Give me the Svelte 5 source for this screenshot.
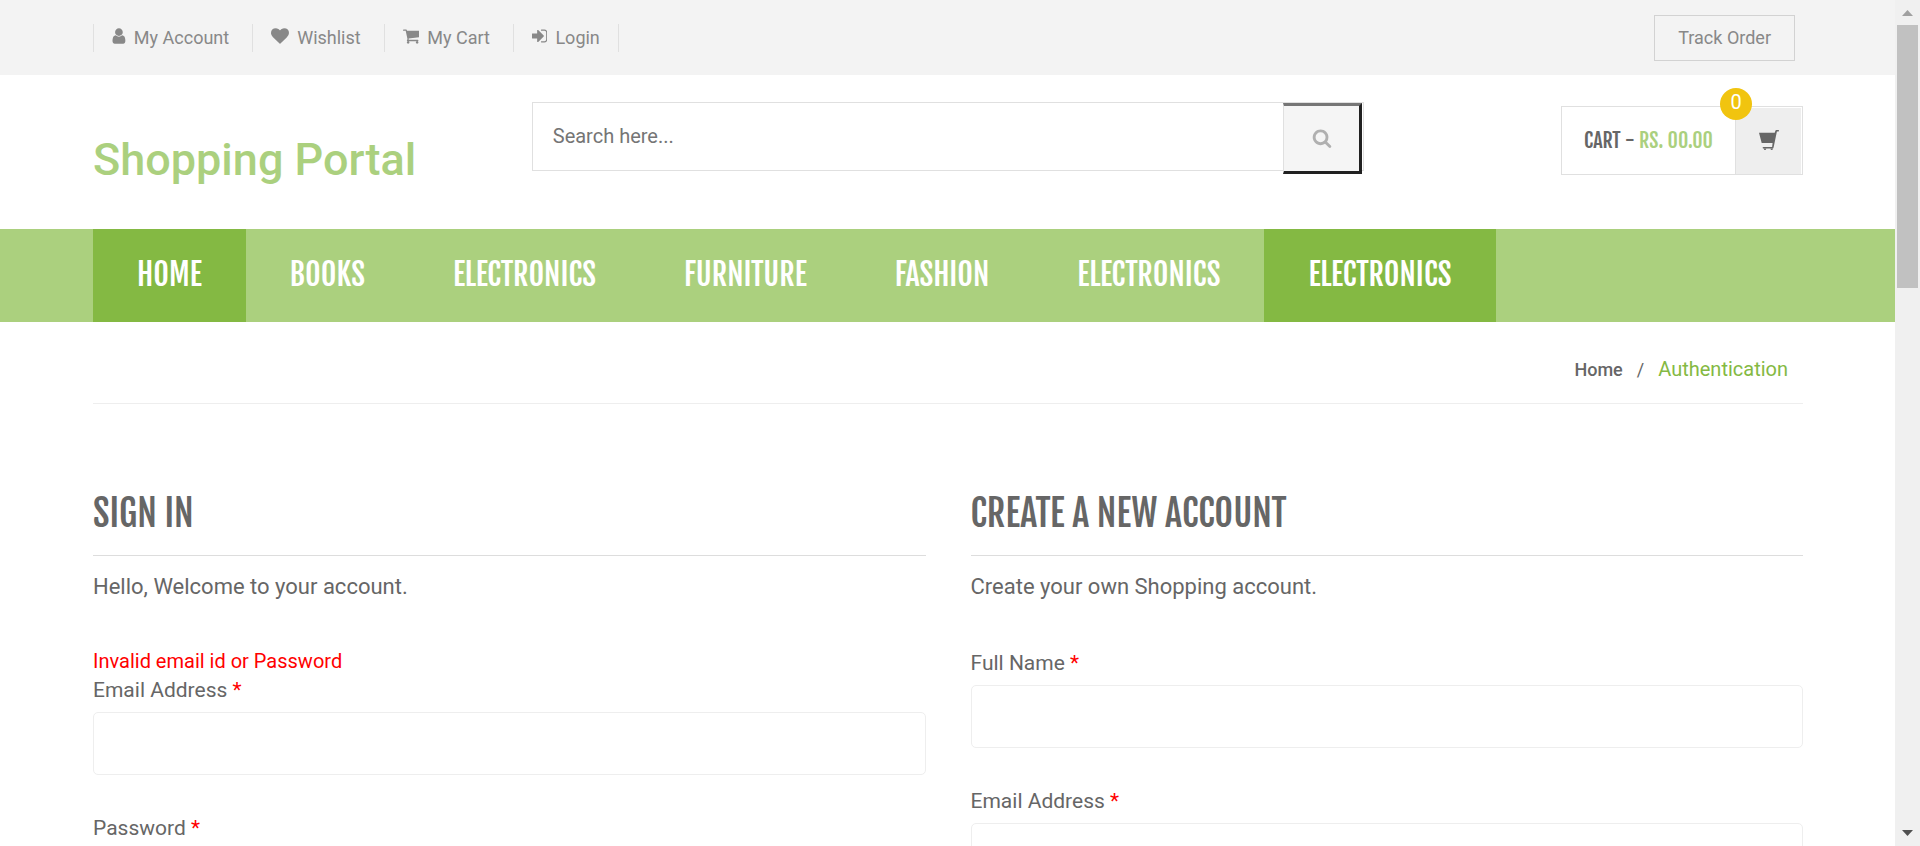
<script lang="ts">
  const ICONS = {
    user: 'M1536 1399q0 109-62.5 187t-150.5 78h-854q-88 0-150.5-78t-62.5-187q0-85 8.5-160.5t31.5-152 58.5-131 94-89 134.5-34.5q131 128 313 128t313-128q76 0 134.5 34.5t94 89 58.5 131 31.5 152 8.5 160.5zm-256-887q0 159-112.5 271.5t-271.5 112.5-271.5-112.5-112.5-271.5 112.5-271.5 271.5-112.5 271.5 112.5 112.5 271.5z',
    heart: 'M896 1664q-26 0-44-18l-624-602q-10-8-27.5-26t-55.5-65.5-68-97.5-53.5-121-23.5-138q0-220 127-344t351-124q62 0 126.5 21.5t120 58 95.5 68.5 76 68q36-36 76-68t95.5-68.5 120-58 126.5-21.5q224 0 351 124t127 344q0 221-229 450l-623 600q-18 18-44 18z',
    cart: 'M704 1536q0 52-38 90t-90 38-90-38-38-90 38-90 90-38 90 38 38 90zm896 0q0 52-38 90t-90 38-90-38-38-90 38-90 90-38 90 38 38 90zm128-1088v512q0 24-16.5 42.5t-40.5 21.5l-1044 122q13 60 13 70 0 16-24 64h920q26 0 45 19t19 45-19 45-45 19h-1024q-26 0-45-19t-19-45q0-11 8-31.5t16-36 21.5-40 15.5-29.5l-177-823h-204q-26 0-45-19t-19-45 19-45 45-19h256q16 0 28.5 6.5t19.5 15.5 13 24.5 8 26 5.5 29.5 4.5 26h1201q26 0 45 19t19 45z',
    signIn: 'M1312 896q0 26-19 45l-544 544q-19 19-45 19t-45-19-19-45v-288h-448q-26 0-45-19t-19-45v-384q0-26 19-45t45-19h448v-288q0-26 19-45t45-19 45 19l544 544q19 19 19 45zm352-352v704q0 119-84.5 203.5t-203.5 84.5h-320q-13 0-22.5-9.5t-9.5-22.5q0-4-1-20t-.5-26.5 3-23.5 10-19.5 20.5-6.5h320q66 0 113-47t47-113v-704q0-66-47-113t-113-47h-312l-11.5-1-11.5-3-8-5.5-7-9-2-13.5q0-4-1-20t-.5-26.5 3-23.5 10-19.5 20.5-6.5h320q119 0 203.5 84.5t84.5 203.5z',
    search: 'M1216 832q0-185-131.5-316.5t-316.5-131.5-316.5 131.5-131.5 316.5 131.5 316.5 316.5 131.5 316.5-131.5 131.5-316.5zm512 832q0 52-38 90t-90 38q-54 0-90-38l-343-342q-179 124-399 124-143 0-273.5-55.5t-225-150-150-225-55.5-273.5 55.5-273.5 150-225 225-150 273.5-55.5 273.5 55.5 225 150 150 225 55.5 273.5q0 220-124 399l343 343q37 37 37 90z',
  };

  const accountLinks = [
    { label: 'My Account', icon: ICONS.user, box: '206 0 1380 1792' },
    { label: 'Wishlist', icon: ICONS.heart, box: '0 0 1792 1792' },
    { label: 'My Cart', icon: ICONS.cart, box: '64 0 1664 1792' },
    { label: 'Login', icon: ICONS.signIn, box: '128 0 1536 1792' },
  ];

  const navItems = [
    { label: 'Home', active: true },
    { label: 'Books', active: false },
    { label: 'Electronics', active: false },
    { label: 'Furniture', active: false },
    { label: 'Fashion', active: false },
    { label: 'Electronics', active: false },
    { label: 'Electronics', active: true },
  ];

  const signInFields = [
    { id: 'signin-email', label: 'Email Address', type: 'email' },
    { id: 'signin-password', label: 'Password', type: 'password' },
  ];

  const registerFields = [
    { id: 'register-name', label: 'Full Name', type: 'text' },
    { id: 'register-email', label: 'Email Address', type: 'email' },
  ];
</script>

{#snippet fields(list)}
  {#each list as field}
    <div class="field">
      <label for={field.id}>{field.label} <span class="required">*</span></label>
      <input id={field.id} type={field.type} />
    </div>
  {/each}
{/snippet}

<div class="shell">
  <div class="page">
    <div class="topbar container">
      <ul class="account">
        {#each accountLinks as link}
          <li>
            <a href="#top">
              <svg class="glyph" viewBox={link.box} aria-hidden="true"><path d={link.icon} /></svg>
              {link.label}
            </a>
          </li>
        {/each}
      </ul>
      <a class="track" href="#track">Track Order</a>
    </div>

    <header class="header container">
      <a class="logo" href="#home">Shopping Portal</a>
      <form class="search">
        <input type="text" placeholder="Search here..." aria-label="Search" />
        <button type="button" aria-label="Search">
          <svg viewBox="0 0 1792 1792" aria-hidden="true"><path d={ICONS.search} /></svg>
        </button>
      </form>
      <a class="cart" href="#cart">
        <span class="total">Cart - <span class="amount">Rs. 00.00</span></span>
        <span class="basket">
          <svg viewBox="0 0 20 20" aria-hidden="true">
            <path d="M0 2.700H15.700L16.400 0.700Q16.600 0 17.400 0H19.500Q20 0 20 .7T19.400 1.500H17.900L14.800 16.400Q14.500 18.600 13.500 18.600H4.500Q3.600 18.600 3.600 17.800T4.500 17H13.100L13.600 13H2.700Z" />
            <path d="M4.800 18.400h2.400v.4a1.200 1.200 0 0 1-2.400 0ZM11.500 18.400h2.400v.4a1.200 1.200 0 0 1-2.400 0Z" />
          </svg>
        </span>
        <span class="count">0</span>
      </a>
    </header>

    <nav class="nav container">
      {#each navItems as item}
        <a href="#category" class:active={item.active}>{item.label}</a>
      {/each}
    </nav>

    <div class="container">
      <div class="breadcrumb">
        <a href="#home">Home</a>
        <span>/</span>
        <span class="current">Authentication</span>
      </div>

      <main class="columns">
        <section>
          <h4>Sign in</h4>
          <p class="intro">Hello, Welcome to your account.</p>
          <form>
            <p class="error">Invalid email id or Password</p>
            {@render fields(signInFields)}
          </form>
        </section>
        <section>
          <h4>Create a new account</h4>
          <p class="intro">Create your own Shopping account.</p>
          <form>
            {@render fields(registerFields)}
          </form>
        </section>
      </main>
    </div>
  </div>

  <div class="scrollbar" aria-hidden="true">
    <svg class="arrow up" viewBox="0 0 11 6"><path d="M0 6 5.500 0 11 6Z" /></svg>
    <div class="thumb"></div>
    <svg class="arrow down" viewBox="0 0 11 6"><path d="M0 0 5.500 6 11 0Z" /></svg>
  </div>
</div>

<style>
  :global(body) {
    margin: 0;
    background: #fff;
    overflow: hidden;
  }

  .shell {
    display: grid;
    grid-template-columns: minmax(0, 1fr) 25px;
    height: 100vh;
    color: #666;
    font-family: Roboto, sans-serif;
    font-size: 20px;
    line-height: 28px;
  }

  .shell * {
    box-sizing: border-box;
  }

  .page {
    overflow: hidden;
  }

  a {
    color: inherit;
    text-decoration: none;
  }

  p,
  h4,
  ul {
    margin: 0;
    padding: 0;
  }

  svg {
    display: block;
    fill: currentColor;
  }

  .container {
    padding: 0 92px 0 93px;
  }

  /* Top bar */
  .topbar {
    display: flex;
    align-items: center;
    justify-content: space-between;
    height: 75px;
    background: #f3f3f3;
    color: #888;
    font-size: 18px;
  }

  .account {
    display: flex;
    list-style: none;
    border-left: 1px solid #e0e0e0;
  }

  .account li {
    padding: 0 23px 0 18px;
    border-right: 1px solid #e0e0e0;
  }

  .account li:last-child {
    padding-right: 18px;
  }

  .account a {
    display: flex;
    gap: 8px;
  }

  .glyph {
    width: auto;
    height: 18px;
    margin-top: 3px;
  }

  .track {
    margin-right: 8px;
    padding: 8px 23px;
    border: 1px solid #d2d2d2;
  }

  /* Header */
  .header {
    display: grid;
    grid-template-columns: repeat(12, minmax(0, 1fr));
    column-gap: 45px;
    align-items: start;
    height: 154px;
  }

  .logo {
    grid-column: span 3;
    padding-top: 71px;
    color: #abd07e;
    font-size: 45px;
    font-weight: 500;
    white-space: nowrap;
  }

  .search {
    grid-column: span 6;
    display: flex;
    height: 69px;
    margin-top: 27px;
    padding-right: 1px;
    border: 1px solid #e0e0e0;
  }

  .search input {
    flex: 1;
    min-width: 0;
    padding: 0 20px 2px;
    border: 0;
    outline: 0;
    background: none;
    color: #666;
    font: 20px Roboto, sans-serif;
  }

  .search input::placeholder {
    color: #757575;
  }

  .search button {
    display: grid;
    place-items: center;
    width: 79px;
    height: 71px;
    padding: 0 0 2px;
    border: 3px solid #212121;
    border-top-color: #767676;
    border-left: 1px solid #e0e0e0;
    background: #f5f5f5;
    color: #b0b0b0;
  }

  .search button svg {
    width: 20px;
    height: 20px;
  }

  .cart {
    grid-column: span 3;
    justify-self: end;
    position: relative;
    display: flex;
    height: 69px;
    margin-top: 31px;
    border: 1px solid #e0e0e0;
    font-family: "Fjalla One", "Liberation Sans Narrow", sans-serif;
    font-size: 20px;
    text-transform: uppercase;
  }

  .total {
    padding: 0 22px;
    line-height: 67px;
    white-space: nowrap;
  }

  .amount {
    color: #abd07e;
  }

  .basket {
    display: grid;
    place-items: center;
    width: 66px;
    margin: 1px 1px 0 0;
    padding-bottom: 2px;
    border-left: 1px solid #e0e0e0;
    background: #eee;
  }

  .basket svg {
    width: 20px;
    height: 20px;
  }

  .count {
    position: absolute;
    top: -19px;
    right: 50px;
    width: 32px;
    height: 32px;
    border-radius: 50%;
    background: #f1c40f;
    color: #fff;
    font: 20px/28px Roboto, sans-serif;
    text-align: center;
  }

  /* Category navigation */
  .nav {
    display: flex;
    height: 93px;
    background: #abd07e;
    color: #fff;
    font-family: "Fjalla One", "Liberation Sans Narrow", sans-serif;
    font-size: 30px;
    line-height: 91px;
    text-transform: uppercase;
  }

  .nav a {
    padding: 0 44px;
  }

  .nav .active {
    background: #84b943;
  }

  /* Breadcrumb */
  .breadcrumb {
    display: flex;
    align-items: baseline;
    justify-content: flex-end;
    gap: 14px;
    height: 82px;
    padding: 33px 15px 0 0;
    border-bottom: 1px solid #eee;
    font-size: 18px;
  }

  .breadcrumb a {
    font-weight: 500;
  }

  .breadcrumb .current {
    color: #84b943;
    font-size: 20px;
  }

  /* Forms */
  .columns {
    display: grid;
    grid-template-columns: repeat(2, minmax(0, 1fr));
    column-gap: 45px;
    padding-top: 88px;
  }

  h4 {
    height: 64px;
    border-bottom: 1px solid #ddd;
    font-family: "Fjalla One", "Liberation Sans Narrow", sans-serif;
    font-size: 36px;
    font-weight: 400;
    line-height: 44px;
    text-transform: uppercase;
  }

  .intro {
    padding: 17px 0 46px;
    font-size: 22px;
  }

  .error {
    margin-bottom: -1px;
    color: #f00;
  }

  .field {
    padding-bottom: 37px;
  }

  .field label {
    display: block;
    padding: 2px 0 8px;
    font-size: 21px;
  }

  .required {
    color: #f00;
  }

  .field input {
    display: block;
    width: 100%;
    height: 63px;
    padding: 0 18px;
    border: 1px solid #eee;
    border-radius: 5px;
    outline: 0;
    background: #fff;
    font: 20px Roboto, sans-serif;
  }

  /* Scroll track at the window edge */
  .scrollbar {
    display: flex;
    flex-direction: column;
    align-items: center;
    padding: 10px 2px;
    background: #f0f0f0;
  }

  .arrow {
    width: 11px;
    height: 6px;
  }

  .up {
    color: #a0a0a0;
  }

  .down {
    margin-top: auto;
    color: #505050;
  }

  .thumb {
    width: 21px;
    height: 263px;
    margin-top: 9px;
    background: #c1c1c1;
  }
</style>
